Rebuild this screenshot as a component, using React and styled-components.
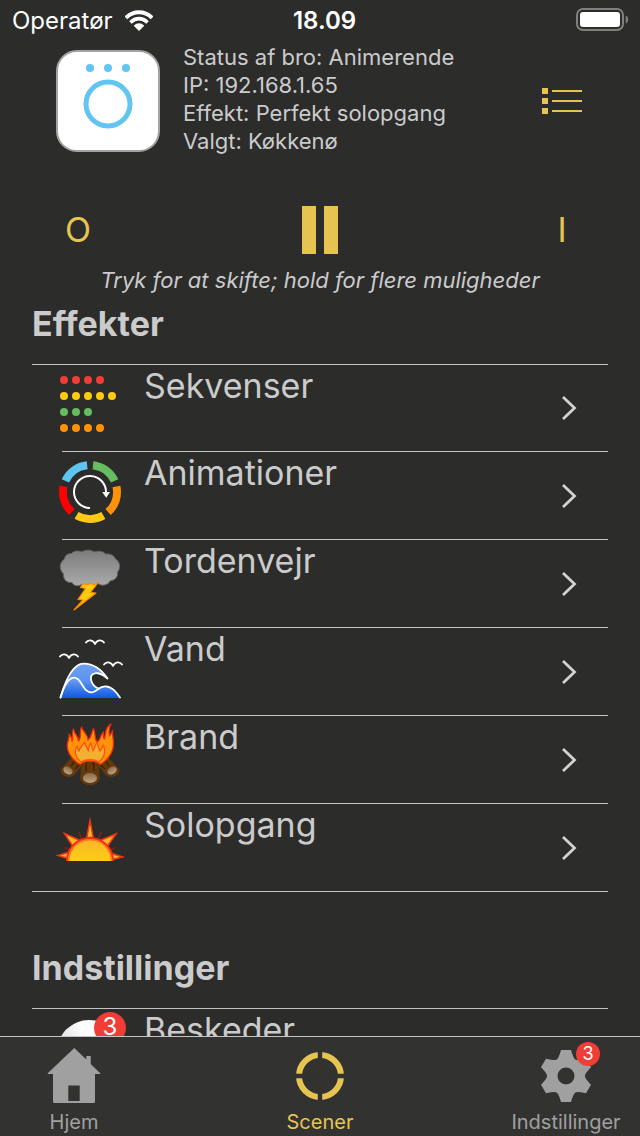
import { useState } from "react";
import styled, { createGlobalStyle } from "styled-components";

const colors = {
  background: "#2c2c2b",
  bar: "#323231",
  text: "#cbcbcb",
  line: "#c4c4c4",
  gold: "#e5c452",
  gray: "#a0a0a0",
  badge: "#f03d36",
};

const GlobalStyle = createGlobalStyle`
  * {
    box-sizing: border-box;
  }
  body {
    margin: 0;
    background: ${colors.background};
    color: ${colors.text};
    font-family: Inter, "Liberation Sans", sans-serif;
  }
  button {
    padding: 0;
    border: none;
    background: none;
    font-family: inherit;
    cursor: pointer;
  }
`;

const Screen = styled.div`
  height: 100vh;
  display: flex;
  flex-direction: column;
`;

const StatusBar = styled.div`
  display: grid;
  grid-template-columns: 1fr auto 1fr;
  align-items: center;
  height: 42px;
  padding: 0 11px 0 12px;
  color: white;
  font-size: 24px;
  line-height: 42px;

  .carrier {
    display: flex;
    align-items: center;
    gap: 12px;
  }
  .clock {
    padding-left: 8px;
    font-weight: 600;
  }
  .battery {
    justify-self: end;
  }
  svg {
    display: block;
    margin-bottom: 2px;
  }
`;

const BridgeHeader = styled.header`
  display: flex;
  align-items: center;
  gap: 23px;
  padding: 1px 36px 0 56px;
`;

const BridgeLogo = styled.svg`
  flex: none;
  width: 104px;
  height: 102px;
`;

const BridgeInfo = styled.div`
  flex: 1;
  padding-bottom: 4px;
  font-size: 22px;
  line-height: 28px;

  p {
    margin: 0;
  }
`;

const ControlButton = styled.button`
  display: flex;
  align-items: center;
  justify-content: center;
  width: 84px;
  height: 60px;
  color: ${colors.gold};
  font-size: 34px;
  line-height: 60px;
`;

const Controls = styled.div`
  display: flex;
  justify-content: space-between;
  padding: 41px 36px 0;
`;

const Hint = styled.p`
  margin: 6px 0 8px;
  font-size: 22px;
  font-style: italic;
  line-height: 28px;
  text-align: center;
`;

const Content = styled.main`
  flex: 1;
  min-height: 0;
  overflow-y: auto;
  scrollbar-width: none;
`;

const Section = styled.section`
  padding: 0 32px;

  & + & {
    margin-top: 54px;
  }
`;

const SectionTitle = styled.h2`
  margin: 0 0 18px;
  font-size: 34px;
  font-weight: 700;
  line-height: 44px;
`;

const List = styled.ul`
  margin: 0;
  padding: 0;
  list-style: none;
  border-top: 1px solid ${colors.line};
  border-bottom: 1px solid ${colors.line};
`;

const Item = styled.li`
  height: 88px;
  margin-left: 30px;
  border-bottom: 1px solid ${colors.line};

  &:first-child,
  &:last-child {
    height: 87px;
  }
  &:last-child {
    border-bottom: none;
  }
`;

const RowLink = styled.a`
  display: flex;
  height: 100%;
  margin-left: -8px;
  padding-right: 30px;
  color: inherit;
  text-decoration: none;

  .label {
    flex: 1;
    padding-left: 18px;
    font-size: 34px;
    line-height: 42px;
  }
  .chevron {
    align-self: center;
  }
`;

const IconBox = styled.span`
  position: relative;
  flex: none;
  width: 72px;
  padding-top: 4px;

  svg {
    display: block;
    width: 72px;
    height: 72px;
  }
`;

const Badge = styled.span`
  position: absolute;
  top: ${(props) => (props.$small ? "-5px" : "3px")};
  right: ${(props) => (props.$small ? "-4px" : "0")};
  width: ${(props) => (props.$small ? "24px" : "32px")};
  height: ${(props) => (props.$small ? "24px" : "32px")};
  border-radius: 50%;
  background: ${colors.badge};
  color: white;
  font-size: ${(props) => (props.$small ? "18px" : "24px")};
  line-height: ${(props) => (props.$small ? "24px" : "30px")};
  text-align: center;
`;

const TabBar = styled.nav`
  flex: none;
  display: flex;
  justify-content: space-between;
  height: 100px;
  padding: 10px 16px 0;
  border-top: 1px solid ${colors.line};
  background: ${colors.bar};
`;

const TabButton = styled.button`
  display: flex;
  flex-direction: column;
  align-items: center;
  width: 116px;
  color: ${(props) => (props.$active ? colors.gold : colors.gray)};
  font-size: 20px;
  line-height: 28px;

  .tab_icon {
    position: relative;
    height: 60px;
    margin-bottom: 1px;
  }
  svg {
    display: block;
  }
`;

const WifiIcon = () => (
  <svg width="28" height="21" viewBox="0 0 28 21">
    <clipPath id="wifi">
      <path d="M14 21L-4 3V-5H32V3Z" />
    </clipPath>
    <g clipPath="url(#wifi)" fill="none" stroke="white">
      <circle cx="14" cy="20" r="17.8" strokeWidth="4" />
      <circle cx="14" cy="20" r="11.3" strokeWidth="3.8" />
      <circle cx="14" cy="20" r="3.4" strokeWidth="6.8" />
    </g>
  </svg>
);

const BatteryIcon = () => (
  <svg width="53" height="24" viewBox="0 0 53 24">
    <rect x="1" y="1" width="46" height="21" rx="6" fill="none" stroke="#7f7f7e" strokeWidth="2" />
    <rect x="4" y="4" width="40" height="15" rx="3" fill="white" />
    <path d="M49.7 7.5C53 8.5 53 14.5 49.7 15.5Z" fill="#7f7f7e" />
  </svg>
);

const SequenceIcon = () => {
  const rows = [
    { color: "#f03d36", count: 4 },
    { color: "#fecb10", count: 5 },
    { color: "#65bd60", count: 3 },
    { color: "#ff9208", count: 4 },
  ];
  return (
    <svg viewBox="0 0 72 72">
      {rows.map((row, y) =>
        Array.from({ length: row.count }, (_, x) => (
          <circle key={`${x}-${y}`} cx={10 + x * 12} cy={11 + y * 16} r="4" fill={row.color} />
        ))
      )}
    </svg>
  );
};

const AnimationIcon = () => (
  <svg viewBox="0 0 72 72" fill="none">
    {["#65bd60", "#ff9208", "#fecb10", "#ff0000", "#5ec4f0"].map((color, i) => (
      <circle
        key={color}
        cx="36"
        cy="36"
        r="27"
        stroke={color}
        strokeWidth="8"
        strokeDasharray="28 200"
        transform={`rotate(${-83.7 + i * 72} 36 36)`}
      />
    ))}
    <path d="M36 52A16 16 0 1 1 52 36.5" stroke="white" strokeWidth="2" />
    <path d="M48.2 36H56L52.2 41.7Z" fill="white" />
  </svg>
);

const StormIcon = () => (
  <svg viewBox="0 0 72 72">
    <defs>
      <linearGradient id="cloud" x1="0" y1="0" x2="0" y2="1">
        <stop offset="0" stopColor="#7c7c7c" />
        <stop offset="1" stopColor="#aaaaaa" />
      </linearGradient>
    </defs>
    <path
      d="M10.5 15C11 11 14 9.5 17.5 9.5C20 6.5 25 6.5 28 8C31 5.5 37 5.5 40 8C44 6.5 49 7 51.5 10C56 9.5 60 11 61.5 15C66 17.5 67 24 63.5 28C64.5 33 60 37 56.5 36.5C54 41.5 47.5 42.5 44 39.5C40 42 37 41 36 39.5C33 42 30 41 28 40C24 43.5 19.5 41.5 18 38.5C13 39 9 35.5 9.5 30C5 25 5 19 10.5 15Z"
      fill="url(#cloud)"
      stroke="#666"
      strokeWidth="1"
    />
    <path
      d="M26.5 43.5L29 39.7L33 40.6L36.5 39.5L40 40.5L43.8 39L36.5 48.5L42 49L31 57.5L20 66L29 56L24 55.5L31.5 44.5Z"
      fill="#fecb10"
      stroke="#ff8a00"
      strokeWidth="1.2"
      strokeLinejoin="round"
    />
  </svg>
);

const WaterIcon = () => (
  <svg viewBox="0 0 72 72" fill="none">
    <defs>
      <linearGradient id="water" x1="0" y1="32" x2="0" y2="66" gradientUnits="userSpaceOnUse">
        <stop offset="0" stopColor="#6fa0f2" />
        <stop offset="0.5" stopColor="#5c92f0" />
        <stop offset="1" stopColor="#0f5be0" />
      </linearGradient>
      <linearGradient id="waterFront" x1="0" y1="45" x2="0" y2="66" gradientUnits="userSpaceOnUse">
        <stop offset="0" stopColor="#76a4f3" />
        <stop offset="1" stopColor="#0e5ae2" />
      </linearGradient>
    </defs>
    <path
      d="M6 66C11 50 18 32 29.5 31.7C41 31.5 49 40 53.5 46.5C46 40 40 40 37.5 43.5C35.5 48 39 55 45 56.5L38 62L20 64Z"
      fill="url(#water)"
    />
    <path d="M6 66C10 54 14 45.5 20.5 45.7C28 46 28 60.5 38 60.3C43 60 45 54 51.5 54.3C58 54.5 62 60 66.5 66Z" fill="url(#waterFront)" />
    <g stroke="white" strokeWidth="1.8" strokeLinecap="round" strokeLinejoin="round">
      <path d="M6.5 65.5C11 50 18 32 29.5 31.7C41 31.5 49 40 53.5 46.5C46 40 40 40 37.5 43.5C35.5 48 39 55 45 56.5" />
      <path d="M6.5 65.5C10 54 14 45.5 20.5 45.7C28 46 28 60.5 38 60.3C43 60 45 54 51.5 54.3C58 54.5 62 60 66 65.5" />
      <path d="M32 10.5C34 7.5 39 7.5 41 12C43 7.5 48 7.5 50 10.5" />
      <path d="M6 24.5C8 21.5 13 21.5 15 26C17 21.5 22 21.5 24 24.5" />
      <path d="M50 32.5C52 29.5 57 29.5 59 34C61 29.5 66 29.5 68 32.5" />
    </g>
  </svg>
);

const FireIcon = () => (
  <svg viewBox="0 0 72 72">
    <defs>
      <linearGradient id="logEnd" x1="0" y1="0" x2="0" y2="1">
        <stop offset="0" stopColor="#8a6a48" />
        <stop offset="1" stopColor="#bda488" />
      </linearGradient>
    </defs>
    <path d="M18 37L30 43L21 54C17 60 5 56 7 49Z" fill="#643a0b" />
    <path d="M54 37L42 43L51 54C55 60 67 56 65 49Z" fill="#643a0b" />
    <path d="M17 46L22 39M21 49L28 42M55 46L50 39M51 49L44 42" stroke="#3f2408" strokeWidth="1.5" />
    <path d="M28 38H44L45.8 58C45.500 67.500 26.500 67.500 26.200 58Z" fill="#643a0b" />
    <path d="M32.500 42L32 51M39.500 42L40 51" stroke="#3f2408" strokeWidth="1.5" />
    <ellipse cx="14" cy="50.5" rx="5" ry="3.500" transform="rotate(30 14 50.5)" fill="url(#logEnd)" />
    <ellipse cx="58" cy="50.5" rx="5" ry="3.500" transform="rotate(-30 58 50.5)" fill="url(#logEnd)" />
    <ellipse cx="36" cy="58" rx="7" ry="5" fill="url(#logEnd)" />
    <path
      d="M26 44.5C17 39 11 30 14 21C15 18 15.5 17 15 14C17 16 18 18 18 21C20 17 17 13 19.5 9C20 14 25 17 24.5 21C28 17 25 12 27.5 7C29 12 34 15 34 20C38 17 37 13 39.5 8.5C42 14 40 18 43 22C47 20 46 15 49.5 12C49 16 49 18 50.5 19C52 13 51 8 57 4C54 9 55 12 55.5 16C57 14 58 13 58.5 10.5C58 17 61 22 58.5 30C56 37 52 41 46.5 44.5C41 40 31 40 26 44.5Z"
      fill="#ff9208"
      stroke="#ee2a0c"
      strokeWidth="1.3"
      strokeLinejoin="round"
    />
    <path
      d="M27 42C21 37 20 31 23 26C24 29 24 30 25 31C26 27 29 26 30.5 22C31.5 26 33 28 34.5 31C35 27 35 25 36.5 23C38 26 38 28 39 31C41 28 41 25 43 22C44 26 44 28 46 31C48 29 48 27 49.5 25C52 32 50 38 45 42C40 39 32 39 27 42Z"
      fill="#f4b033"
      stroke="#ff5410"
      strokeWidth="1.3"
      strokeLinejoin="round"
    />
  </svg>
);

const SunriseIcon = () => (
  <svg viewBox="0 0 72 72">
    <defs>
      <linearGradient id="sun" x1="0" y1="32" x2="0" y2="53" gradientUnits="userSpaceOnUse">
        <stop offset="0" stopColor="#f8b42c" />
        <stop offset="1" stopColor="#ffd010" />
      </linearGradient>
      <clipPath id="horizon">
        <rect width="72" height="53" />
      </clipPath>
    </defs>
    <g clipPath="url(#horizon)">
      <path
        d="M25 24L27.5 31M47 24L44.5 31M10.5 39.5L15.5 42M61.5 39.5L56.5 42"
        stroke="#9c1c14"
        strokeWidth="1.3"
      />
      <g fill="#ffb42c" stroke="#f03810" strokeWidth="1.5" strokeLinejoin="miter" strokeMiterlimit="12">
        <path d="M32.8 29.5L36 12.5L39.2 29.5Z" />
        <path d="M46 32.5L62 26L52.5 39.5Z" />
        <path d="M26 32.5L10.5 25.5L19.5 39.5Z" />
        <path d="M58 45.5L68.5 49L58 51.5Z" />
        <path d="M14 44.5L4 47.5L14 50.5Z" />
      </g>
      <circle cx="36" cy="53" r="22.5" fill="url(#sun)" stroke="#ee2f12" strokeWidth="3" />
      <circle cx="36" cy="53" r="21.5" fill="none" stroke="#ff7a1c" strokeWidth="1.5" />
    </g>
  </svg>
);

const MessageIcon = () => (
  <svg viewBox="0 0 72 72">
    <defs>
      <radialGradient id="ball" cx="0.55" cy="0.1" r="0.8">
        <stop offset="0.2" stopColor="#ffffff" />
        <stop offset="1" stopColor="#cfcfcf" />
      </radialGradient>
    </defs>
    <circle cx="35" cy="39" r="32" fill="url(#ball)" />
  </svg>
);

const HomeIcon = () => (
  <svg width="56" height="60" viewBox="0 0 56 60" fill="currentColor">
    <path
      fillRule="evenodd"
      d="M28.3 1L40.3 12.6V9H44.7V17L54.3 26.3V27H49V54.5Q49 56 47.5 56H8.5Q7 56 7 54.5V27H1.7V26.3ZM22.3 38.5V54H33.7V38.5Z"
    />
  </svg>
);

const SceneIcon = () => (
  <svg width="60" height="60" viewBox="0 0 60 60">
    <circle cx="30" cy="29" r="21" fill="none" stroke={colors.gold} strokeWidth="6" />
    <path d="M30 2V56M3 29H57" stroke={colors.bar} strokeWidth="4.4" />
  </svg>
);

const GearIcon = () => (
  <svg width="60" height="60" viewBox="0 0 60 60" fill="currentColor">
    <g transform="translate(30 29)">
      {[0, 60, 120, 180, 240, 300].map((angle) => (
        <path key={angle} d="M-9.5 -16.5Q-7.5 -17 -5 -26H5Q7.5 -17 9.5 -16.5Z" transform={`rotate(${angle})`} />
      ))}
      <circle r="13.75" fill="none" stroke="currentColor" strokeWidth="10.5" />
    </g>
  </svg>
);

const effects = [
  { label: "Sekvenser", icon: <SequenceIcon /> },
  { label: "Animationer", icon: <AnimationIcon /> },
  { label: "Tordenvejr", icon: <StormIcon /> },
  { label: "Vand", icon: <WaterIcon /> },
  { label: "Brand", icon: <FireIcon /> },
  { label: "Solopgang", icon: <SunriseIcon /> },
];

const settings = [{ label: "Beskeder", icon: <MessageIcon />, badge: 3 }];

const tabs = [
  { label: "Hjem", icon: <HomeIcon /> },
  { label: "Scener", icon: <SceneIcon /> },
  { label: "Indstillinger", icon: <GearIcon />, badge: 3 },
];

const MenuSection = ({ title, items }) => (
  <Section>
    <SectionTitle>{title}</SectionTitle>
    <List>
      {items.map((item) => (
        <Item key={item.label}>
          <RowLink href={`#${item.label.toLowerCase()}`}>
            <IconBox>
              {item.icon}
              {item.badge && <Badge>{item.badge}</Badge>}
            </IconBox>
            <span className="label">{item.label}</span>
            <svg className="chevron" width="18" height="26" viewBox="0 0 18 26">
              <path d="M3 2L14.5 13L3 24" fill="none" stroke="#d2d2d2" strokeWidth="2.8" />
            </svg>
          </RowLink>
        </Item>
      ))}
    </List>
  </Section>
);

const App = () => {
  const [activeTab, setActiveTab] = useState("Scener");

  return (
    <Screen>
      <GlobalStyle />
      <StatusBar>
        <div className="carrier">
          Operatør
          <WifiIcon />
        </div>
        <div className="clock">18.09</div>
        <div className="battery">
          <BatteryIcon />
        </div>
      </StatusBar>
      <BridgeHeader>
        <BridgeLogo viewBox="0 0 104 102">
          <rect x="1" y="1" width="102" height="100" rx="20" fill="white" stroke="#a3a3a3" strokeWidth="2" />
          <g fill="#62c5f1">
            <circle cx="34" cy="18" r="4" />
            <circle cx="52" cy="18" r="4" />
            <circle cx="70" cy="18" r="4" />
          </g>
          <circle cx="52" cy="54" r="22" fill="none" stroke="#62c5f1" strokeWidth="5" />
        </BridgeLogo>
        <BridgeInfo>
          <p>Status af bro: Animerende</p>
          <p>IP: 192.168.1.65</p>
          <p>Effekt: Perfekt solopgang</p>
          <p>Valgt: Køkkenø</p>
        </BridgeInfo>
        <ControlButton aria-label="Liste">
          <svg width="40" height="26" viewBox="0 0 40 26" fill={colors.gold}>
            <path d="M0 0H6V6H0ZM0 10H6V16H0ZM0 20H6V26H0ZM10 2H40V4H10ZM10 12H40V14H10ZM10 22H40V24H10Z" />
          </svg>
        </ControlButton>
      </BridgeHeader>
      <Controls>
        <ControlButton>O</ControlButton>
        <ControlButton aria-label="Pause">
          <svg width="36" height="48" viewBox="0 0 36 48" fill={colors.gold}>
            <path d="M0 0H14V48H0ZM22 0H36V48H22Z" />
          </svg>
        </ControlButton>
        <ControlButton>I</ControlButton>
      </Controls>
      <Hint>Tryk for at skifte; hold for flere muligheder</Hint>
      <Content>
        <MenuSection title="Effekter" items={effects} />
        <MenuSection title="Indstillinger" items={settings} />
      </Content>
      <TabBar>
        {tabs.map((tab) => (
          <TabButton key={tab.label} $active={tab.label === activeTab} onClick={() => setActiveTab(tab.label)}>
            <span className="tab_icon">
              {tab.icon}
              {tab.badge && <Badge $small>{tab.badge}</Badge>}
            </span>
            {tab.label}
          </TabButton>
        ))}
      </TabBar>
    </Screen>
  );
};

export default App;
